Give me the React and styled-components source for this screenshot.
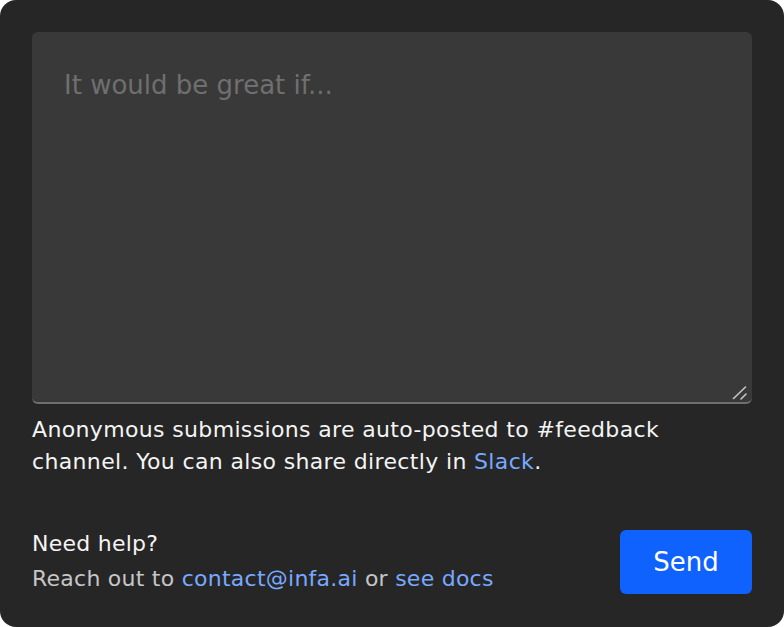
import React from "react";
import styled, { createGlobalStyle } from "styled-components";

const GlobalStyle = createGlobalStyle`
  html, body {
    margin: 0;
    padding: 0;
    background: #ffffff;
  }
  * {
    box-sizing: border-box;
  }
`;

const Card = styled.div`
  width: 784px;
  height: 627px;
  background: #262626;
  border-radius: 16px;
  padding: 32px;
  display: flex;
  flex-direction: column;
  font-family: "DejaVu Sans", "Open Sans", sans-serif;
  color: #f4f4f4;
`;

const Field = styled.div`
  position: relative;
`;

const TextArea = styled.textarea`
  display: block;
  width: 100%;
  height: 372px;
  background: #393939;
  border: none;
  border-bottom: 2px solid #6f6f6f;
  border-radius: 6px;
  padding: 38px 32px;
  font-family: inherit;
  font-size: 26px;
  color: #f4f4f4;
  resize: none;
  outline: none;

  &::placeholder {
    color: #6f6f6f;
  }
`;

// drawn resize grip, sits over the textarea corner
const Grip = styled.svg`
  position: absolute;
  right: 5px;
  bottom: 4px;
  width: 15px;
  height: 15px;
  pointer-events: none;
`;

const Helper = styled.p`
  margin: 10px 0 0;
  max-width: 660px;
  font-size: 22px;
  line-height: 32px;
  letter-spacing: 0.35px;
  color: #f4f4f4;
`;

const Link = styled.a`
  color: #78a9ff;
  text-decoration: none;
`;

const Footer = styled.div`
  margin-top: auto;
  display: flex;
  justify-content: space-between;
  align-items: center;
`;

const HelpBlock = styled.div`
  display: flex;
  flex-direction: column;
  gap: 3px;
  letter-spacing: 0.25px;
`;

const HelpTitle = styled.div`
  font-size: 22px;
  line-height: 32px;
  color: #f4f4f4;
`;

const HelpText = styled.div`
  font-size: 22px;
  line-height: 32px;
  color: #c6c6c6;
`;

const SendButton = styled.button`
  width: 132px;
  height: 64px;
  background: #0f62fe;
  color: #ffffff;
  border: none;
  border-radius: 6px;
  font-family: inherit;
  font-size: 26px;
  cursor: pointer;
`;

export default function App() {
  return (
    <>
      <GlobalStyle />
      <Card>
        <Field>
          <TextArea placeholder="It would be great if..." />
          <Grip viewBox="0 0 15 15">
            <path
              d="M1.5 13.5 L13.5 2 M9 14 L14 9"
              stroke="#c6c6c6"
              strokeWidth="1.6"
              strokeLinecap="round"
            />
          </Grip>
        </Field>
        <Helper>
          Anonymous submissions are auto-posted to #feedback channel. You can
          also share directly in <Link href="#">Slack</Link>.
        </Helper>
        <Footer>
          <HelpBlock>
            <HelpTitle>Need help?</HelpTitle>
            <HelpText>
              Reach out to <Link href="#">contact@infa.ai</Link> or{" "}
              <Link href="#">see docs</Link>
            </HelpText>
          </HelpBlock>
          <SendButton>Send</SendButton>
        </Footer>
      </Card>
    </>
  );
}
